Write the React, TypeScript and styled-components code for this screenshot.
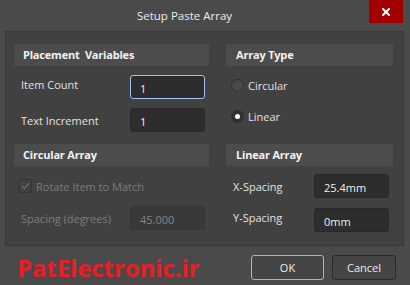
import React from "react";
import styled, { createGlobalStyle, css } from "styled-components";
import { X } from "lucide-react";

const GlobalStyle = createGlobalStyle`
    html, body{
        margin:0;
        padding:0;
        background:#4a4a4a;
    }
    body{
        font-family:"Open Sans","Noto Sans",sans-serif;
    }
`;

const Window = styled.div`
    width:410px;
    height:285px;
    background:#4a4a4a;
    display:flex;
    flex-direction:column;
    color:#e6e6e6;
    font-size:11px;
`;
const TitleBar = styled.div`
    height:31px;
    display:flex;
    align-items:flex-start;
`;
const Title = styled.div`
    flex:1;
    text-align:center;
    line-height:31px;
    font-size:11.5px;
    color:#ececec;
`;
const CloseButton = styled.div`
    width:34px;
    height:23px;
    margin-right:7px;
    background:#a10000;
    display:flex;
    align-items:center;
    justify-content:center;
    color:white;
`;
const Panel = styled.div`
    margin:0 6px 0 5px;
    height:215px;
    box-sizing:border-box;
    border:1px solid #393939;
    background:#414141;
    padding:12px 10px 0 8px;
    display:grid;
    grid-template-columns:195px 167px;
    column-gap:17px;
    row-gap:12px;
    align-content:start;
`;
const Section = styled.div`
    display:flex;
    flex-direction:column;
`;
const SectionHeader = styled.div<{ $pad?: number }>`
    height:22px;
    line-height:22px;
    background:#4c4c4c;
    padding-left:${p => p.$pad ?? 9}px;
    font-weight:700;
    font-size:11px;
    letter-spacing:-0.2px;
    color:#f2f2f2;
    white-space:pre;
`;
const FieldRow = styled.div<{ $top: number }>`
    display:flex;
    align-items:center;
    justify-content:space-between;
    padding:0 4px 0 7px;
    margin-top:${p => p.$top}px;
`;
const Label = styled.span<{ $disabled?: boolean; $lift?: number }>`
    color:${p => p.$disabled ? "#7c7c7c" : "#e2e2e2"};
    padding-bottom:${p => p.$lift ?? 0}px;
`;
const TextInput = styled.input<{ $focused?: boolean }>`
    width:75px;
    height:24px;
    box-sizing:border-box;
    border-radius:3px;
    border:1px solid #282828;
    background:#2d2d2d;
    color:#f0f0f0;
    font-family:inherit;
    font-size:11px;
    padding:2px 0 0 9px;
    outline:none;
    ${p => p.$focused && css`
        border-color:#9ac4ee;
    `}
    &:disabled{
        background:#393939;
        border-color:#363636;
        color:#858585;
    }
`;
const RadioList = styled.div`
    display:flex;
    flex-direction:column;
    gap:18px;
    margin-top:13px;
    padding-left:5px;
`;
const RadioRow = styled.div`
    display:flex;
    align-items:center;
    gap:4px;
    height:13px;
`;
const RadioDot = styled.span<{ $checked?: boolean }>`
    width:11px;
    height:11px;
    border-radius:50%;
    border:1px solid #2e2e2e;
    background:${p => p.$checked ? "#303030" : "#4a4a4a"};
    display:flex;
    align-items:center;
    justify-content:center;
    &::after{
        content:"";
        width:5px;
        height:5px;
        border-radius:50%;
        background:${p => p.$checked ? "#ffffff" : "transparent"};
    }
`;
const CheckRow = styled.div`
    display:flex;
    align-items:center;
    gap:4px;
    margin-top:13px;
    padding-left:4px;
    height:14px;
`;
const Checkbox = styled.span`
    width:14px;
    height:14px;
    box-sizing:border-box;
    border:1px solid #343434;
    border-radius:3px;
    display:flex;
    align-items:center;
    justify-content:center;
`;
const Footer = styled.div`
    flex:1;
    display:flex;
    align-items:flex-start;
    padding:9px 14px 0 17px;
`;
const Watermark = styled.div`
    flex:1;
    color:#ec1c24;
    font-weight:700;
    font-size:24px;
    line-height:25px;
    letter-spacing:-0.1px;
`;
const Button = styled.div<{ $primary?: boolean; $w: number }>`
    width:${p => p.$w}px;
    height:25px;
    box-sizing:border-box;
    border-radius:3px;
    border:1px solid ${p => p.$primary ? "#8fbbe8" : "#2b2b2b"};
    background:#454545;
    display:flex;
    align-items:center;
    justify-content:center;
    color:#ececec;
    margin-left:8px;
`;

function CheckMark(){
    return <svg width="9" height="8" viewBox="0 0 9 8">
        <path d="M1 4.2 L3.4 6.5 L8 1.3" fill="none" stroke="#777" strokeWidth="1.1" />
    </svg>;
}

function App(){
    return <Window>
        <GlobalStyle />
        <TitleBar>
            <Title>Setup Paste Array</Title>
            <CloseButton><X size={12} strokeWidth={4} /></CloseButton>
        </TitleBar>
        <Panel>
            <Section>
                <SectionHeader>{"Placement  Variables"}</SectionHeader>
                <FieldRow $top={9}>
                    <Label $lift={5}>Item Count</Label>
                    <TextInput $focused readOnly value="1" />
                </FieldRow>
                <FieldRow $top={9}>
                    <Label>Text Increment</Label>
                    <TextInput readOnly value="1" />
                </FieldRow>
            </Section>
            <Section>
                <SectionHeader $pad={10}>Array Type</SectionHeader>
                <RadioList>
                    <RadioRow><RadioDot /><Label>Circular</Label></RadioRow>
                    <RadioRow><RadioDot $checked /><Label>Linear</Label></RadioRow>
                </RadioList>
            </Section>
            <Section>
                <SectionHeader>Circular Array</SectionHeader>
                <CheckRow>
                    <Checkbox><CheckMark /></Checkbox>
                    <Label $disabled>Rotate Item to Match</Label>
                </CheckRow>
                <FieldRow $top={13}>
                    <Label $disabled>Spacing (degrees)</Label>
                    <TextInput disabled value="45.000" />
                </FieldRow>
            </Section>
            <Section>
                <SectionHeader $pad={10}>Linear Array</SectionHeader>
                <FieldRow $top={8}>
                    <Label>X-Spacing</Label>
                    <TextInput readOnly value="25.4mm" />
                </FieldRow>
                <FieldRow $top={10}>
                    <Label $lift={5}>Y-Spacing</Label>
                    <TextInput readOnly value="0mm" />
                </FieldRow>
            </Section>
        </Panel>
        <Footer>
            <Watermark>PatElectronic.ir</Watermark>
            <Button $primary $w={73}>OK</Button>
            <Button $w={64}>Cancel</Button>
        </Footer>
    </Window>;
}

export default App;
